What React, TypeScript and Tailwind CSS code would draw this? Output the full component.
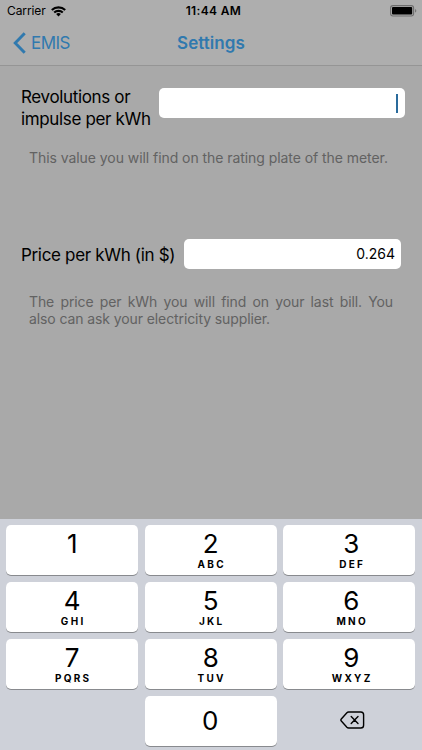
const KEYS = [
  { digit: "1", letters: "" },
  { digit: "2", letters: "ABC" },
  { digit: "3", letters: "DEF" },
  { digit: "4", letters: "GHI" },
  { digit: "5", letters: "JKL" },
  { digit: "6", letters: "MNO" },
  { digit: "7", letters: "PQRS" },
  { digit: "8", letters: "TUV" },
  { digit: "9", letters: "WXYZ" },
];

function StatusBar() {
  return (
    <div className="grid h-[22px] grid-cols-3 items-center pl-[7px] pr-[5px] text-black">
      <div className="flex items-center gap-[5px]">
        <span className="text-[12px] leading-[22px] tracking-[-0.1px]">Carrier</span>
        <svg width="15" height="11" viewBox="0 0 15 11" fill="none" stroke="currentColor" strokeWidth="2.1">
          <path d="M.8 4.1a9.6 9.6 0 0 1 13.4 0" />
          <path d="M3.2 6.6a6.2 6.2 0 0 1 8.6 0" />
          <path d="M7.5 10.5 5.1 8.1a3.5 3.5 0 0 1 4.8 0z" fill="currentColor" stroke="none" />
        </svg>
      </div>
      <span className="pl-[3px] text-center text-[12px] font-semibold leading-[22px] tracking-[0.35px]">11:44 AM</span>
      <svg className="justify-self-end" width="27" height="12" viewBox="0 0 27 12">
        <rect x=".6" y=".6" width="23" height="10.4" rx="2.4" fill="none" stroke="#6e6e6e" strokeWidth="1.1" />
        <rect x="2" y="2" width="20.2" height="7.6" rx="1" />
        <path d="M25.1 4c1.6.5 1.6 3.1 0 3.6z" fill="#6e6e6e" />
      </svg>
    </div>
  );
}

function NavBar() {
  return (
    <header className="grid h-[44px] grid-cols-3 items-center border-b border-[#959595] pb-px text-[#3079ae]">
      <button className="flex items-center gap-[5px] pl-[13px] text-[17px] leading-[22px] tracking-[-0.55px]">
        <svg width="13" height="22" viewBox="0 0 13 22" fill="none" stroke="currentColor" strokeWidth="2.9">
          <path d="M11.7 1.2 2.2 11l9.5 9.8" />
        </svg>
        EMIS
      </button>
      <h1 className="text-center text-[17px] font-semibold leading-[22px] tracking-[0.05px]">Settings</h1>
    </header>
  );
}

function Keypad() {
  return (
    <div className="grid h-[231px] grid-cols-3 content-start gap-x-[6.5px] gap-y-[7px] bg-[#ced1d9] pl-[6.2px] pr-[6.8px] pt-[6.4px] text-black">
      {KEYS.map((key) => (
        <button
          key={key.digit}
          className="flex h-[50px] flex-col items-center rounded-[5px] bg-white pt-[4px] shadow-[0_1px_0_#888a8e] nth-[3n]:pl-[4px]"
        >
          <span className="text-[26px] leading-[29px]">{key.digit}</span>
          <span className="pl-[2px] pt-px text-[10px] font-bold leading-[11px] tracking-[2.3px]">{key.letters}</span>
        </button>
      ))}
      <button className="col-start-2 h-[50px] rounded-[5px] bg-white pr-px text-[26px] leading-[48px] shadow-[0_1px_0_#888a8e]">
        0
      </button>
      <button className="flex h-[50px] items-center justify-center pb-[2px] pl-[7px]" aria-label="Delete">
        <svg width="25" height="18" viewBox="0 0 25 18" fill="none" stroke="currentColor" strokeWidth="1.4" strokeLinejoin="round">
          <path d="M8.6 1h12.2a2.8 2.8 0 0 1 2.8 2.8v10.4a2.8 2.8 0 0 1-2.8 2.8H8.6a2.4 2.4 0 0 1-1.7-.7L1.3 10a1.5 1.5 0 0 1 0-2l5.6-6.3A2.4 2.4 0 0 1 8.6 1z" />
          <path d="m11.2 5.6 6.8 6.8m0-6.8-6.8 6.8" strokeLinecap="round" />
        </svg>
      </button>
    </div>
  );
}

export default function App() {
  return (
    <div className="flex h-[750px] w-[422px] flex-col overflow-hidden bg-[#a9a9a9] font-['Inter','Liberation_Sans',sans-serif]">
      <div className="bg-[#aeaeae]">
        <StatusBar />
        <NavBar />
      </div>

      <main className="flex-1 text-black">
        <div className="flex pl-[21px] pt-[21px]">
          <label className="w-[138px] whitespace-nowrap text-[17px] leading-[21.5px] tracking-[-0.35px]">
            Revolutions or
            <br />
            impulse per kWh
          </label>
          <div className="mt-px flex h-[30px] w-[246px] items-center justify-end rounded-[5px] bg-white pr-[7px]">
            <span className="h-[19px] w-[2px] bg-[#2a6b9c]" />
          </div>
        </div>
        <p className="ml-[29px] mt-[19px] whitespace-nowrap text-[14px] leading-[17px] tracking-[-0.06px] text-[#626262]">
          This value you will find on the rating plate of the meter.
        </p>

        <div className="mt-[73px] flex items-center pl-[21px]">
          <label className="w-[163px] whitespace-nowrap pt-[2px] text-[17px] leading-[28px] tracking-[-0.33px]">
            Price per kWh (in $)
          </label>
          <div className="h-[30px] w-[217px] rounded-[5px] bg-white pr-[6px] text-right text-[14px] leading-[30px]">
            0.264
          </div>
        </div>
        <p className="ml-[29px] mt-[24px] w-[364px] text-justify text-[14px] leading-[17px] tracking-[-0.1px] text-[#626262]">
          The price per kWh you will find on your last bill. You also can ask your electricity supplier.
        </p>
      </main>

      <Keypad />
    </div>
  );
}
